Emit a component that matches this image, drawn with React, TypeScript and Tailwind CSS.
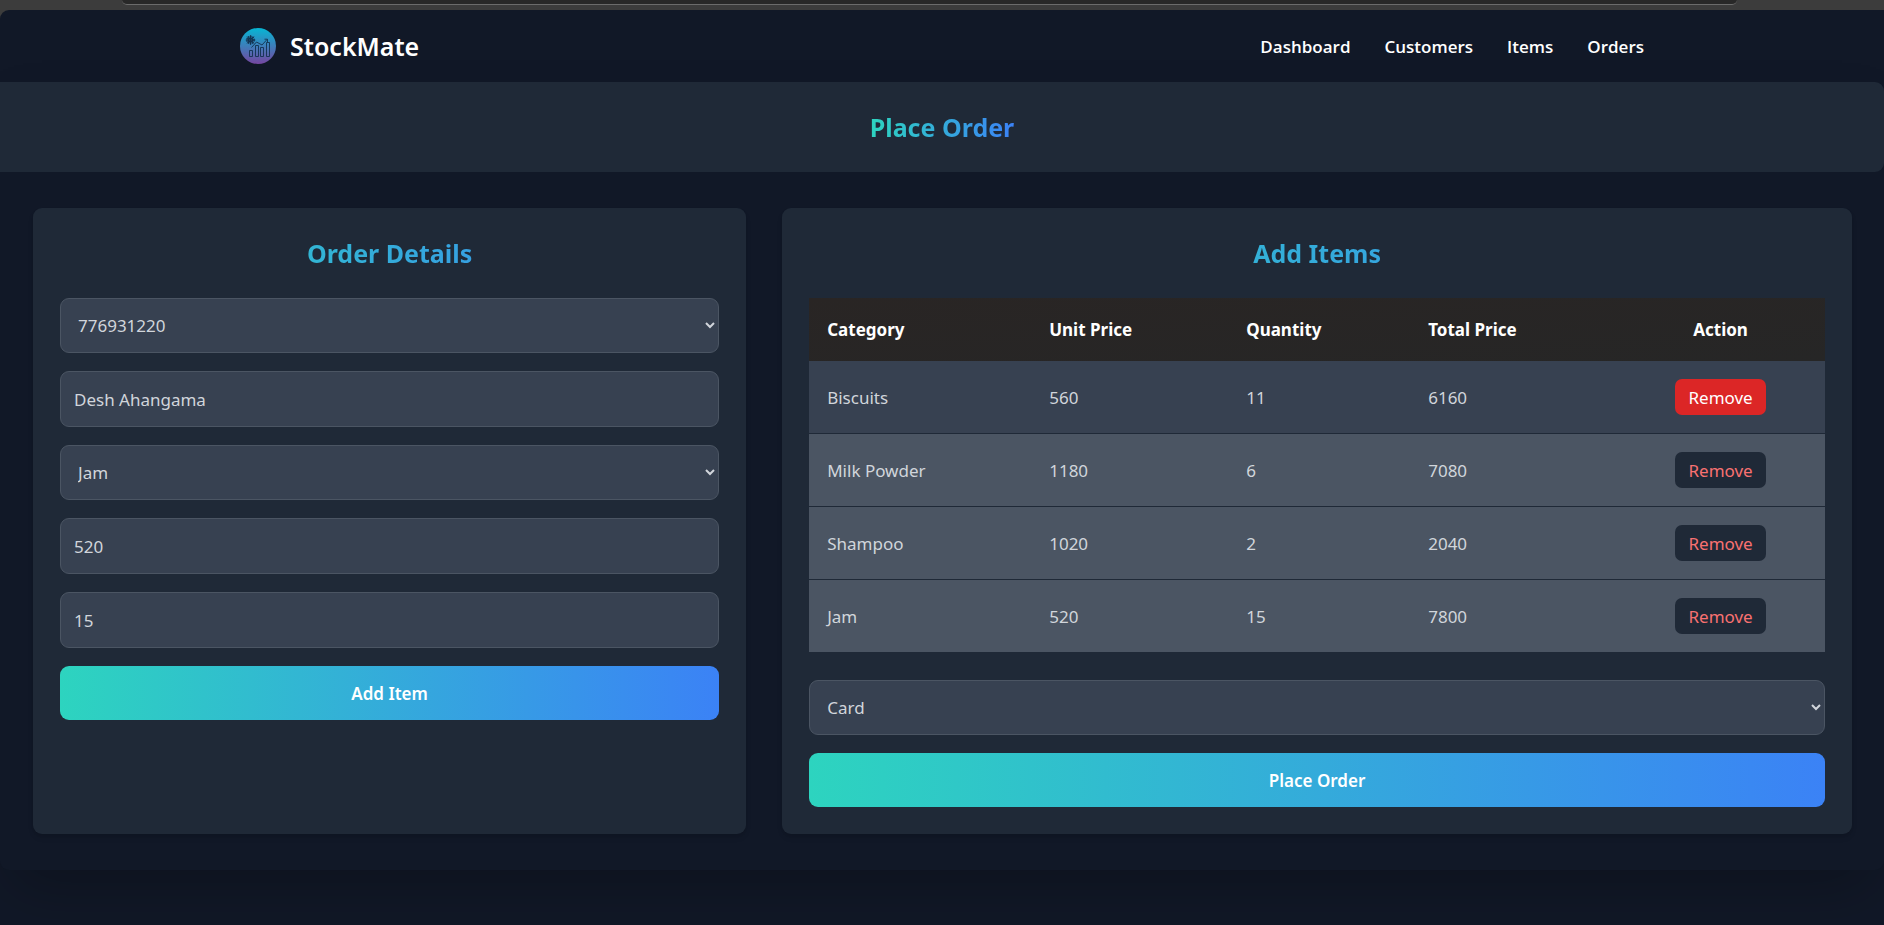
import { useState } from "react";

type OrderLine = { name: string; price: number; quantity: number };

const initialLines: OrderLine[] = [
  { name: "Biscuits", price: 560, quantity: 11 },
  { name: "Milk Powder", price: 1180, quantity: 6 },
  { name: "Shampoo", price: 1020, quantity: 2 },
  { name: "Jam", price: 520, quantity: 15 },
];

const fieldClass =
  "w-full rounded-[9px] border border-[#4b5563] bg-[#374151] px-[13px] text-[#d1d5db] outline-none";
const headingClass =
  "mb-[27px] bg-linear-to-r from-[#2dd4bf] to-[#3b82f6] bg-clip-text text-center text-[25px] leading-[36px] font-bold text-transparent [--tw-gradient-position:to_right]";
const submitClass =
  "h-[54px] w-full rounded-[9px] bg-linear-to-r from-[#2dd4bf] to-[#3b82f6] font-semibold text-white [--tw-gradient-position:to_right]";

function Logo() {
  return (
    <svg viewBox="0 0 36 36" className="size-9" aria-hidden="true">
      <defs>
        <linearGradient id="logo-fill" x1="0" y1="0" x2="0" y2="1">
          <stop offset="0" stopColor="#06b6d4" />
          <stop offset="1" stopColor="#7546a0" />
        </linearGradient>
      </defs>
      <circle cx="18" cy="18" r="18" fill="url(#logo-fill)" />
      <g fill="none" stroke="#133250" strokeWidth="0.9">
        <circle cx="10.5" cy="12" r="3.6" strokeWidth="1.5" strokeDasharray="1.6 0.7" />
        <circle cx="10.5" cy="12" r="2" strokeWidth="1.4" />
        <path d="M10.5 7.2v9.6M5.7 12h9.6M7.1 8.6l6.8 6.8M13.9 8.6l-6.8 6.8" strokeWidth="0.9" />
        <path d="M11.5 19.5l5-5.5 5.5 3 5-5.5M24.5 11.2h3v3" />
        <path d="M9.5 22.5h3v6h-3zM15.5 17.5h3v11h-3zM20.5 19.5h3v9h-3zM26.5 14.5h3v14h-3z" />
      </g>
    </svg>
  );
}

export default function App() {
  const [lines, setLines] = useState(initialLines);
  return (
    <div className="flex min-h-screen flex-col bg-[#111827] font-['Noto_Sans','Open_Sans',sans-serif] text-[17px] leading-[27px]">
      <div className="h-[10px] shrink-0 bg-[#3c3c3c] pr-[147px] pl-[122px]">
        <div className="h-[5px] rounded-b-[14px] border-b border-[#6b6b6b] bg-[#282828]" />
      </div>
      <div className="flex flex-1 flex-col bg-[#3c3c3c]">
        <div className="flex-1 overflow-hidden rounded-tl-[9px] bg-[#111827]">
          <header className="h-[72px]">
            <div className="mx-auto flex h-full max-w-[1440px] items-center justify-between px-[18px]">
              <a href="#home" className="flex items-center gap-[14px]">
                <Logo />
                <span className="text-[25px] leading-[36px] font-semibold text-white">StockMate</span>
              </a>
              <nav className="flex gap-[34px] font-['Open_Sans','Noto_Sans',sans-serif] font-semibold text-white">
                <a href="#dashboard">Dashboard</a>
                <a href="#customers">Customers</a>
                <a href="#items">Items</a>
                <a href="#orders">Orders</a>
              </nav>
            </div>
          </header>

          <main className="rounded-[9px] bg-[#111827] shadow-[0_28px_56px_-14px_rgba(0,0,0,0.25)]">
            <div className="flex justify-center rounded-r-[9px] bg-[#1f2937] py-[27px]">
              <h1 className="bg-linear-to-r from-[#2dd4bf] to-[#3b82f6] bg-clip-text text-[25px] leading-[36px] font-bold text-transparent [--tw-gradient-position:to_right]">
                Place Order
              </h1>
            </div>

            <div className="grid grid-cols-[2fr_3fr] gap-9 py-9 pr-[32px] pl-[33px]">
              <section className="min-w-0 rounded-[9px] bg-[#1f2937] p-[27px] shadow-md">
                <h2 className={headingClass}>Order Details</h2>
                <form className="flex flex-col gap-[18px]" onSubmit={(e) => e.preventDefault()}>
                  <select aria-label="Customer phone" className={`${fieldClass} h-[55px]`}>
                    <option>776931220</option>
                  </select>
                  <input aria-label="Customer name" className={`${fieldClass} h-[56px]`} defaultValue="Desh Ahangama" />
                  <select aria-label="Item" className={`${fieldClass} h-[55px]`} defaultValue="Jam">
                    <option>Jam</option>
                    <option>Shampoo</option>
                    <option>Milk Powder</option>
                    <option>Biscuits</option>
                  </select>
                  <input aria-label="Unit price" className={`${fieldClass} h-[56px]`} defaultValue="520" />
                  <input aria-label="Quantity" className={`${fieldClass} h-[56px]`} defaultValue="15" />
                  <button type="submit" className={submitClass}>
                    Add Item
                  </button>
                </form>
              </section>

              <section className="min-w-0 rounded-[9px] bg-[#1f2937] p-[27px] shadow-md">
                <h2 className={headingClass}>Add Items</h2>
                <table className="mb-[28px] w-full table-fixed border-separate border-spacing-0 text-left text-[#d1d5db]">
                  <colgroup>
                    <col className="w-[222px]" />
                    <col className="w-[197px]" />
                    <col className="w-[182px]" />
                    <col className="w-[206px]" />
                    <col />
                  </colgroup>
                  <thead className="bg-linear-to-br from-[#292524] to-[#262626] text-white">
                    <tr className="h-[63px]">
                      <th className="px-[18px] font-bold">Category</th>
                      <th className="px-[18px] font-bold">Unit Price</th>
                      <th className="px-[18px] font-bold">Quantity</th>
                      <th className="px-[18px] font-bold">Total Price</th>
                      <th className="px-[18px] text-center font-bold">Action</th>
                    </tr>
                  </thead>
                  <tbody>
                    {lines.map((line, i) => (
                      <tr
                        key={line.name}
                        className={`h-[73px] last:h-[72px] last:*:border-b-0 *:border-b *:border-[#1f2937] *:px-[18px] ${
                          i === 0 ? "bg-[#374151]" : "bg-[#4b5563]"
                        }`}
                      >
                        <td>{line.name}</td>
                        <td>{line.price}</td>
                        <td>{line.quantity}</td>
                        <td>{line.price * line.quantity}</td>
                        <td>
                          <button
                            type="button"
                            onClick={() => setLines(lines.filter((l) => l.name !== line.name))}
                            className={`mx-auto block h-9 rounded-[7px] px-[13px] ${
                              i === 0 ? "bg-[#dc2626] text-white" : "bg-[#1f2937] text-[#f87171]"
                            }`}
                          >
                            Remove
                          </button>
                        </td>
                      </tr>
                    ))}
                  </tbody>
                </table>
                <div className="flex flex-col gap-[18px]">
                  <select aria-label="Payment method" className={`${fieldClass} h-[55px]`} defaultValue="Card">
                    <option>Card</option>
                    <option>Cash</option>
                  </select>
                  <button type="button" className={submitClass}>
                    Place Order
                  </button>
                </div>
              </section>
            </div>
          </main>
        </div>
      </div>
    </div>
  );
}
